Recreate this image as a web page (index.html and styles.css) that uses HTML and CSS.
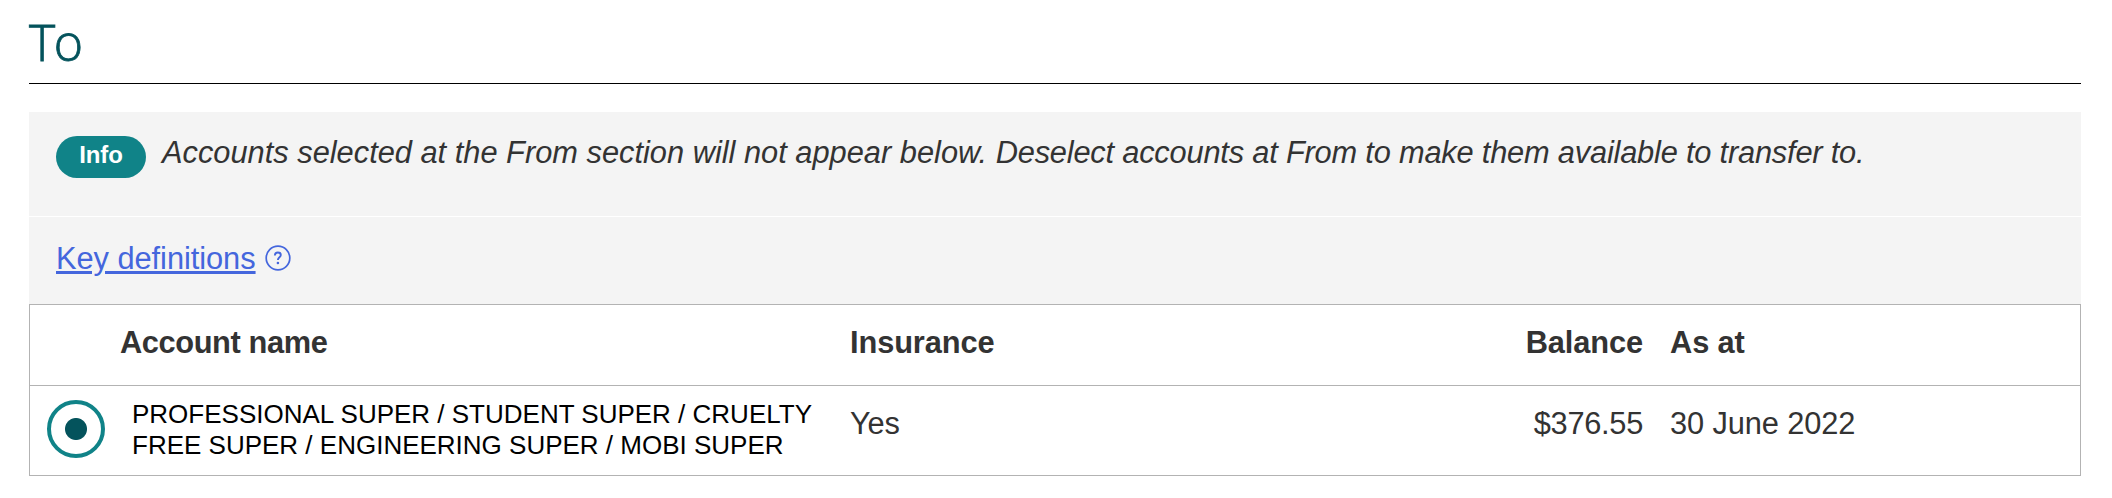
FILE: index.html
```
<!DOCTYPE html>
<html lang="en">
<head>
	<meta charset="UTF-8">
	<meta name="viewport" content="width=device-width, initial-scale=1.0">
	<title>Transfer to</title>
	<link rel="stylesheet" href="styles.css">
</head>
<body>
	<h1 id="title">To</h1>

	<div class="info">
		<span class="badge">Info</span>
		<em class="info-text">Accounts selected at the From section will not appear below. <span class="info-hint">Deselect accounts at From to make them available to transfer to.</span></em>
	</div>

	<div class="definitions">
		<a href="#">Key definitions</a>
		<svg class="help" width="26" height="26" viewBox="0 0 26 26" fill="none" stroke="#4466dd">
			<circle cx="13" cy="13" r="11.8" stroke-width="1.7"/>
			<path d="M9.9 10.4C9.9 8.5 11.2 7.5 12.9 7.5C14.7 7.5 15.8 8.5 15.8 10C15.8 12.2 12.9 12.2 12.9 14.9" stroke-width="1.9"/>
			<circle cx="12.9" cy="18" r="1.3" fill="#4466dd" stroke="none"/>
		</svg>
	</div>

	<table>
		<colgroup>
			<col class="col-select">
			<col class="col-name">
			<col class="col-insurance">
			<col class="col-balance">
			<col class="col-date">
		</colgroup>
		<thead>
			<tr>
				<th class="name" colspan="2">Account name</th>
				<th>Insurance</th>
				<th class="balance">Balance</th>
				<th>As at</th>
			</tr>
		</thead>
		<tbody>
			<tr>
				<td class="select"><input type="radio" name="account" checked></td>
				<td class="account">PROFESSIONAL SUPER / STUDENT SUPER / CRUELTY<br>FREE SUPER / ENGINEERING SUPER / MOBI SUPER</td>
				<td>Yes</td>
				<td class="balance">$376.55</td>
				<td>30 June 2022</td>
			</tr>
		</tbody>
	</table>
</body>
</html>
```

FILE: styles.css
```
* {
	box-sizing: border-box;
}

body {
	margin: 0;
	padding: 0 31px 0 29px;
	background-color: #fff;
	color: #333;
	font-family: "Liberation Sans", Arial, sans-serif;
	font-size: 30.8px;
	letter-spacing: -0.11px;
	line-height: 36px;
}

#title {
	height: 84px;
	margin: 0 0 28px;
	padding-top: 12px;
	border-bottom: 1px solid #000;
	color: #04535c;
	font-family: "Open Sans", sans-serif;
	font-size: 50px;
	font-weight: 300;
	letter-spacing: -1.5px;
	line-height: 60px;
	-webkit-text-stroke: 0.8px #04535c;
}

.info {
	display: flex;
	height: 105px;
	padding: 24px 27px 0;
	border-bottom: 1px solid #fff;
	background-color: #f4f4f4;
}

.badge {
	width: 90px;
	height: 42px;
	margin-right: 16px;
	border-radius: 21px;
	background-color: #108388;
	color: #fff;
	font-size: 24px;
	font-weight: bold;
	line-height: 38px;
	text-align: center;
}

.info-text {
	letter-spacing: 0;
	line-height: 34px;
	white-space: nowrap;
}

.info-hint {
	letter-spacing: -0.2px;
}

.definitions {
	display: flex;
	height: 87px;
	padding: 24px 27px 0;
	background-color: #f4f4f4;
}

.definitions a {
	color: #4466dd;
	letter-spacing: -0.05px;
	text-decoration-thickness: 3px;
	text-underline-offset: 2px;
}

.help {
	margin: 4px 0 0 9px;
}

table {
	width: 100%;
	border: 1px solid #b3b3b3;
	border-collapse: separate;
	border-spacing: 0;
	table-layout: fixed;
}

.col-select {
	width: 102px;
}

.col-name {
	width: 718px;
}

.col-insurance,
.col-balance {
	width: 410px;
}

th, td {
	padding: 0;
	text-align: left;
	vertical-align: top;
}

th {
	height: 81px;
	padding-top: 20px;
	border-bottom: 1px solid #b3b3b3;
}

td {
	height: 89px;
	padding-top: 20px;
}

th.name {
	padding-left: 90px;
	letter-spacing: -0.4px;
}

.balance {
	padding-right: 27px;
	text-align: right;
}

td.balance {
	letter-spacing: -0.3px;
}

td.select {
	padding: 14px 0 0 17px;
}

td.account {
	padding-top: 13px;
	color: #000;
	font-size: 26px;
	letter-spacing: 0;
	line-height: 31px;
	white-space: nowrap;
}

input[type="radio"] {
	display: block;
	width: 58px;
	height: 58px;
	margin: 0;
	border: 4px solid #108388;
	border-radius: 50%;
	appearance: none;
	background: radial-gradient(circle, #04535c 10.5px, #fff 11.5px);
}
```
